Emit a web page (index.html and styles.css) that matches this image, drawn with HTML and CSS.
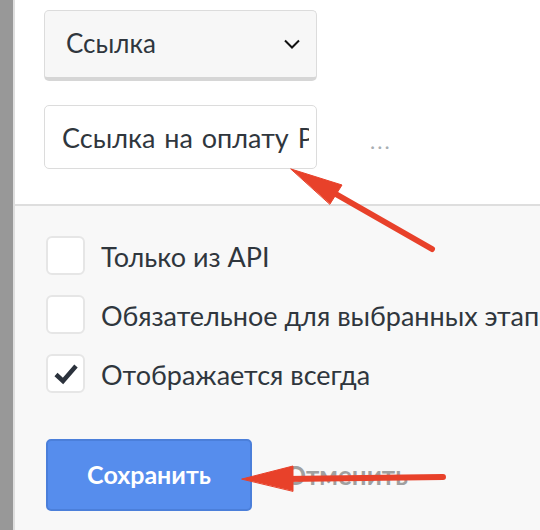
FILE: index.html
```html
<!DOCTYPE html>
<html>
	<head>
		<meta charset="UTF-8">
		<title>Поле</title>
		<link rel="stylesheet" href="styles.css">
	</head>
	<body>
		<div class="page">
			<div class="side"></div>
			<div class="panel">
				<div class="fields">
					<div class="select">
						<span>Ссылка</span>
						<svg class="chevron" width="16" height="10" viewBox="0 0 16 10">
							<path d="M1 1.5 L8 8.5 L15 1.5" fill="none" stroke="#111" stroke-width="2"/>
						</svg>
					</div>
					<div class="input-row">
						<div class="input"><span>Ссылка на оплату Робокасса</span></div>
						<div class="more">...</div>
					</div>
				</div>
				<div class="options">
					<label class="check">
						<span class="box"></span>
						<span class="text">Только из API</span>
					</label>
					<label class="check">
						<span class="box"></span>
						<span class="text">Обязательное для выбранных этапов</span>
					</label>
					<label class="check">
						<span class="box">
							<svg width="26" height="22" viewBox="0 0 26 22">
								<path d="M3 11.5 L10 18 L23 3" fill="none" stroke="#2b323c" stroke-width="4.5" stroke-linejoin="miter"/>
							</svg>
						</span>
						<span class="text">Отображается всегда</span>
					</label>
					<div class="buttons">
						<button class="btn-save">Сохранить</button>
						<a class="btn-cancel" href="###">Отменить</a>
					</div>
				</div>
			</div>
			<!-- стрелки поверх формы -->
			<svg class="arrows" width="540" height="530" viewBox="0 0 540 530">
				<g fill="#e8412a" stroke="#e8412a" stroke-linecap="round">
					<line x1="432" y1="249" x2="320" y2="185" stroke-width="6"/>
					<polygon points="291,169 342,185 330,204" stroke-width="1"/>
					<line x1="443" y1="477" x2="285" y2="479" stroke-width="6"/>
					<polygon points="242,479 293,466 293,491" stroke-width="1"/>
				</g>
			</svg>
		</div>
	</body>
</html>
```

FILE: styles.css
```css
*{
	margin: 0;
	padding: 0;
	box-sizing: border-box;
}
body{
	font-family: Lato, "Noto Sans", sans-serif;
	color: #2f363d;
	background: #f8f8f8;
}
.page{
	position: relative;
	width: 540px;
	height: 530px;
	display: flex;
	overflow: hidden;
}
.side{
	width: 15px;
	background: #989898;
	border-right: 2px solid #dedede;
	flex-shrink: 0;
}
.panel{
	flex: 1;
	display: flex;
	flex-direction: column;
}
.fields{
	background: #fff;
	padding: 10px 0 0 29px;
	height: 206px;
	border-bottom: 2px solid #dedede;
}
.select{
	width: 273px;
	height: 71px;
	background: #f7f7f7;
	border: 1px solid #dcdcdc;
	border-bottom: 4px solid #d6d6d6;
	border-radius: 5px;
	display: flex;
	align-items: center;
	justify-content: space-between;
	padding: 0 16px 2px 21px;
	font-size: 26px;
}
.chevron{
	margin-top: 2px;
}
.input-row{
	margin-top: 24px;
	display: flex;
	align-items: center;
}
.input{
	width: 273px;
	height: 64px;
	border: 1px solid #dcdcdc;
	border-radius: 5px;
	background: #fff;
	padding: 0 0 0 17px;
	display: flex;
	align-items: center;
	overflow: hidden;
	white-space: nowrap;
	font-size: 27px;
	word-spacing: 2px;
}
.input span{
	display: block;
	width: 247px;
	overflow: hidden;
}
.more{
	margin-left: 53px;
	margin-top: 6px;
	color: #a8aeb3;
	font-size: 22px;
	letter-spacing: 2px;
}
.options{
	padding: 30px 0 0 31px;
}
.check{
	display: flex;
	align-items: center;
	height: 39px;
	margin-bottom: 20px;
	white-space: nowrap;
}
.check:nth-child(3){
	margin-bottom: 0;
}
.box{
	width: 39px;
	height: 39px;
	border: 2px solid #e6e6e6;
	border-radius: 6px;
	background: #fff;
	flex-shrink: 0;
	display: flex;
	align-items: center;
	justify-content: center;
}
.text{
	margin-left: 16px;
	font-size: 27px;
	margin-top: 2px;
}
.buttons{
	margin-top: 46px;
	display: flex;
	align-items: center;
}
.btn-save{
	width: 206px;
	height: 72px;
	background: #568ded;
	border: 2px solid #4b7fda;
	border-radius: 5px;
	color: #fff;
	font-family: Lato, "Noto Sans", sans-serif;
	font-weight: bold;
	font-size: 25px;
	padding-bottom: 2px;
}
.btn-cancel{
	margin-left: 33px;
	color: #a0a0a0;
	font-weight: bold;
	font-size: 26px;
	text-decoration: none;
}
.arrows{
	position: absolute;
	left: 0;
	top: 0;
	pointer-events: none;
}
```
